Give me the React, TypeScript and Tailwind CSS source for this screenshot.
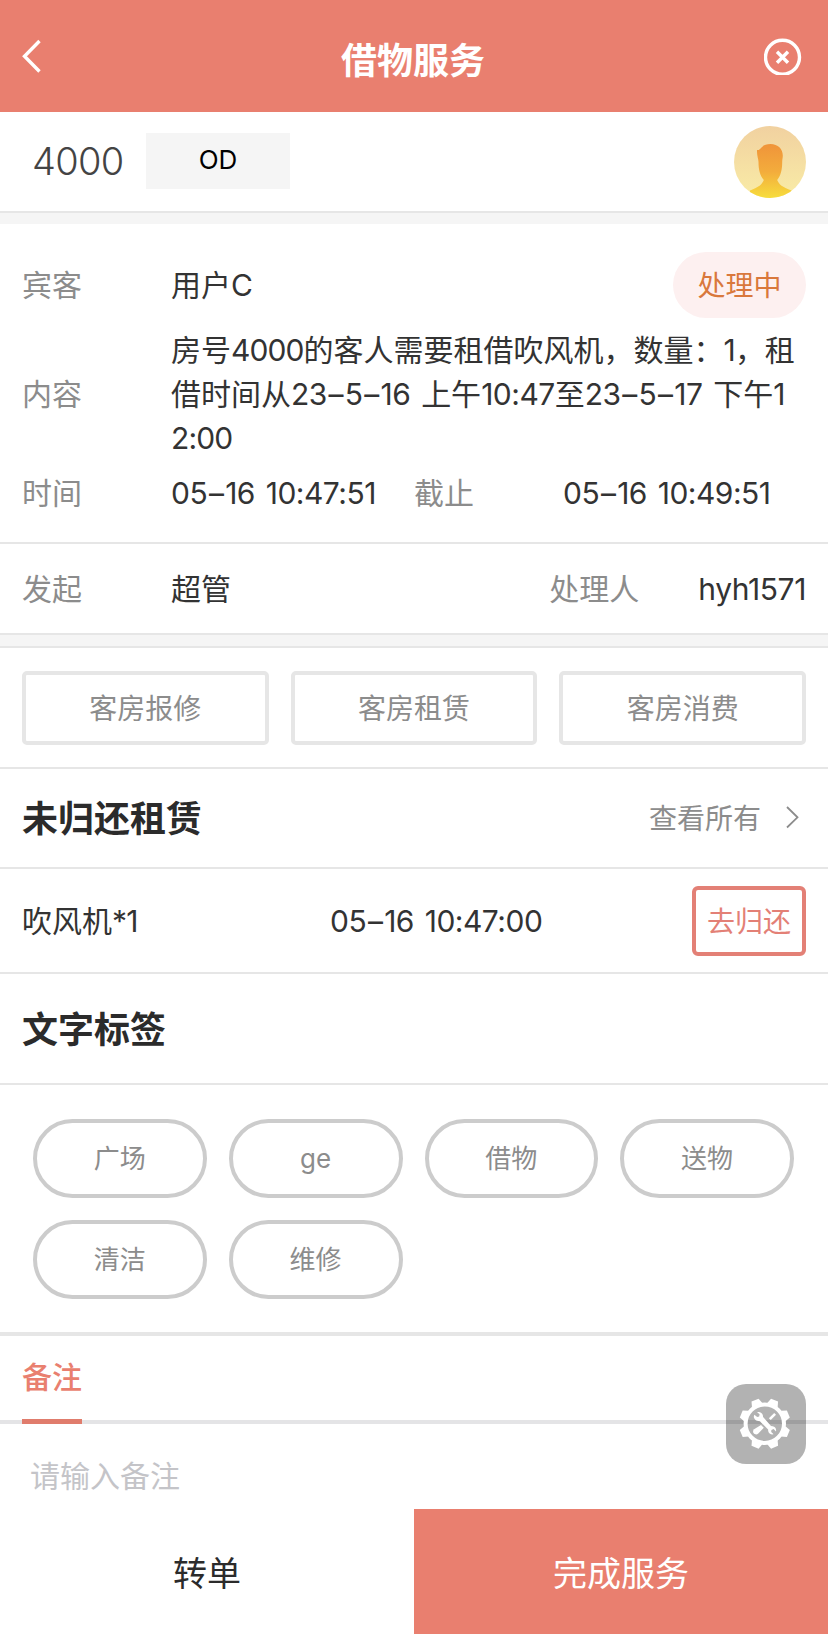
import { Fragment } from "react"

const actions = ["客房报修", "客房租赁", "客房消费"]
const tags = ["广场", "ge", "借物", "送物", "清洁", "维修"]
const teeth = [22.5, 67.5, 112.5, 157.5, 202.5, 247.5, 292.5, 337.5]

// latin letters and digits sit tighter than Inter's default
const En = ({ children }: { children: string }) => (
    <span className="tracking-[-0.9px]">{children}</span>
)

// dates have wide dashes and a wider space before the time
const Time = ({ children }: { children: string }) => (
    <span className="tracking-[-0.5px] whitespace-pre [word-spacing:2.8px]">
        {children.split("–").map((part, i) => (
            <Fragment key={i}>
                {i > 0 && <span className="mx-[1.75px]">–</span>}
                {part}
            </Fragment>
        ))}
    </span>
)

const Avatar = () => (
    <svg width="72" height="72" viewBox="0 0 72 72">
        <defs>
            <linearGradient id="sky" x1="0" y1="0" x2="0" y2="1">
                <stop offset="0" stopColor="#f1d1a0" />
                <stop offset="1" stopColor="#f9eca6" />
            </linearGradient>
            <linearGradient id="body" x1="0" y1="0" x2="0" y2="1">
                <stop offset="0" stopColor="#f0943a" />
                <stop offset="0.5" stopColor="#f3ac3c" />
                <stop offset="1" stopColor="#f7df3d" />
            </linearGradient>
            <clipPath id="round">
                <circle cx="36" cy="36" r="36" />
            </clipPath>
        </defs>
        <circle cx="36" cy="36" r="36" fill="url(#sky)" />
        <path
            clipPath="url(#round)"
            fill="url(#body)"
            d="M23 24c2 .3 3-.7 4.500-2.500C29.500 19 32.500 18 36.500 18c7.500 0 12.300 5 12.300 11.500 0 2.500-.6 4-.6 6.500 0 8-1.500 13.500-5 18 1.800 4.500 5 7 14.300 10.500V73H16v-8.500c9-3.500 12-6 13.800-10.500-3.800-4.500-5.300-10-5.300-18 0-3-1.800-6.500-1.500-12z"
        />
    </svg>
)

const Tools = () => (
    <svg width="80" height="80" viewBox="0 0 80 80">
        <g transform="translate(38.8 39.7)" fill="#fff">
            <circle r="19.200" fill="none" stroke="#fff" strokeWidth="4" />
            {teeth.map((a) => (
                <path key={a} transform={`rotate(${a})`} d="M-5.600-20-3.800-25.500H3.800L5.600-20z" />
            ))}
            <path d="M10.300-9.800 5-4.500" stroke="#fff" strokeWidth="2.600" />
            <path d="M-3.800 1.200-1 4-6.500 9.800c-1.600 1.600-3.800.8-4.600-.2s-1-2.600.4-4z" />
            <path d="M-10.700-5.600c-.5-1.200-.3-2.400.3-3.400l2.800 2.300 2-.6.4-2.200-2.500-2c2.400-.8 5.400.5 5.800 3.200l.2 1.600L6.200 2.400l1.700.1c2.300.2 3.900 2.300 3.300 5.200L8.800 5.400l-2.200.8-.2 2.100 2.400 2.300c-2.600.6-5-.9-5.400-3.300l-.1-1.400-8.200-8.400-1.500-.1c-1.900 0-3.500-1.300-4.300-3z" />
        </g>
    </svg>
)

export default function App() {
    return (
        <div className="relative flex h-[1634px] w-[828px] flex-col overflow-hidden bg-white font-['Inter','Noto_Sans_CJK_SC',sans-serif] text-[30px] leading-[44px] text-[#333]">
            <header className="flex h-28 shrink-0 items-center justify-between bg-[#e97f6f] pr-[26px] pl-[22px] text-white">
                <svg width="40" height="38" viewBox="0 0 40 38" fill="none" stroke="#fff" strokeWidth="3.400">
                    <path d="M17.500 4 2.500 19.300l15 15.200" />
                </svg>
                <h1 className="pt-2.5 text-[36px] font-bold">借物服务</h1>
                <svg width="38" height="38" viewBox="0 0 38 38" fill="none" stroke="#fff" strokeWidth="3.400">
                    <circle cx="18.500" cy="20.300" r="17" />
                    <path d="m13 14.800 11 11m0-11-11 11" />
                </svg>
            </header>

            <div className="flex h-[101px] shrink-0 items-center border-b-2 border-[#e6e6e6] pr-[22px] pl-8">
                <span className="w-[114px] pb-0.5 text-[38px] font-light tracking-[-0.7px] text-[#444]">4000</span>
                <span className="mb-px flex h-14 w-36 items-center justify-center bg-[#f5f5f5] pb-[3px] text-[26px] text-black">OD</span>
                <span className="ml-auto">
                    <Avatar />
                </span>
            </div>
            <div className="h-[11px] shrink-0 bg-[#f5f5f5]" />

            <section className="shrink-0">
                <div className="h-[320px] border-b-2 border-[#e6e6e6] pt-7 pr-[22px] pl-[22px]">
                    <div className="flex h-[66px] items-center">
                        <span className="w-[149px] text-[#8c8c8c]">宾客</span>
                        <span>用户<En>C</En></span>
                        <span className="ml-auto flex h-[66px] w-[133px] items-center justify-center rounded-full bg-[#fdf0f0] pt-0.5 text-[28px] text-[#d9783c]">处理中</span>
                    </div>
                    <div className="mt-[10px] flex items-center">
                        <span className="w-[149px] text-[#8c8c8c]">内容</span>
                        <p className="whitespace-nowrap">
                            房号<En>4000</En>的客人需要租借吹风机，数量：<En>1</En>，租<br />
                            借时间从<Time>23–5–16 </Time>上午<Time>10:47</Time>至<Time>23–5–17 </Time>下午<En>1</En><br />
                            <En>2:00</En>
                        </p>
                    </div>
                    <div className="mt-[11px] flex items-center">
                        <span className="w-[149px] text-[#8c8c8c]">时间</span>
                        <span className="w-[243px]"><Time>05–16 10:47:51</Time></span>
                        <span className="w-[149px] text-[#8c8c8c]">截止</span>
                        <Time>05–16 10:49:51</Time>
                    </div>
                </div>
                <div className="flex h-[91px] items-center border-b-2 border-[#e6e6e6] px-[22px]">
                    <span className="w-[149px] text-[#8c8c8c]">发起</span>
                    <span>超管</span>
                    <span className="mr-[59px] ml-auto text-[#8c8c8c]">处理人</span>
                    <span className="tracking-[-0.4px]">hyh1571</span>
                </div>
            </section>
            <div className="h-[13px] shrink-0 border-b-2 border-[#e6e6e6] bg-[#f5f5f5]" />

            <div className="grid h-[121px] shrink-0 grid-cols-3 gap-[22px] border-b-2 border-[#e6e6e6] px-[22px] pt-[23px]">
                {actions.map((a) => (
                    <button key={a} className="h-[74px] rounded-[5px] border-4 border-[#e6e6e6] pt-0.5 text-[28px] text-[#8c8c8c]">{a}</button>
                ))}
            </div>

            <div className="flex h-[100px] shrink-0 items-center border-b-2 border-[#e6e6e6] px-[22px] pt-0.5">
                <h2 className="text-[36px] font-bold text-[#2b2b2b]">未归还租赁</h2>
                <span className="ml-auto text-[28px] text-[#8c8c8c]">查看所有</span>
                <svg className="mr-1.5 mb-1 ml-[23px]" width="16" height="24" viewBox="0 0 16 24" fill="none" stroke="#8c8c8c" strokeWidth="1.800">
                    <path d="m3 2 10.500 10.300L3 22.500" />
                </svg>
            </div>

            <div className="flex h-[105px] shrink-0 items-center border-b-2 border-[#e6e6e6] px-[22px]">
                <span className="w-[308px]">吹风机<En>*1</En></span>
                <Time>05–16 10:47:00</Time>
                <button className="ml-auto h-[70px] w-[114px] rounded-md border-4 border-[#e38076] pt-0.5 text-[28px] text-[#e38076]">去归还</button>
            </div>

            <div className="flex h-[111px] shrink-0 items-center border-b-2 border-[#e6e6e6] px-[22px] pt-[3px]">
                <h2 className="text-[36px] font-bold text-[#2b2b2b]">文字标签</h2>
            </div>

            <div className="grid h-[251px] shrink-0 grid-cols-4 content-start gap-[22px] border-b-4 border-[#e6e6e6] pt-[34px] pr-[34px] pl-[33px]">
                {tags.map((t) => (
                    <button key={t} className="h-[79px] rounded-full border-4 border-[#ccc] text-[26px] text-[#8c8c8c]">{t}</button>
                ))}
            </div>

            <div className="flex h-[88px] shrink-0 border-b-4 border-[#e4e4e6] px-[22px]">
                <span className="h-[88px] border-b-[5px] border-[#e07c6c] pt-[19px] font-medium text-[#e97f6f]">备注</span>
            </div>
            <div className="h-[85px] shrink-0 px-[30px] pt-[30px] text-[#c4c4c8]">请输入备注</div>

            <footer className="grid flex-1 grid-cols-2 text-[34px]">
                <button className="bg-white pt-1 text-[#2b2b2b]">转单</button>
                <button className="bg-[#e97f6f] pt-1 text-white">完成服务</button>
            </footer>

            <div className="absolute top-[1384px] right-[22px] size-20 rounded-[20px] bg-black/30">
                <Tools />
            </div>
        </div>
    )
}
